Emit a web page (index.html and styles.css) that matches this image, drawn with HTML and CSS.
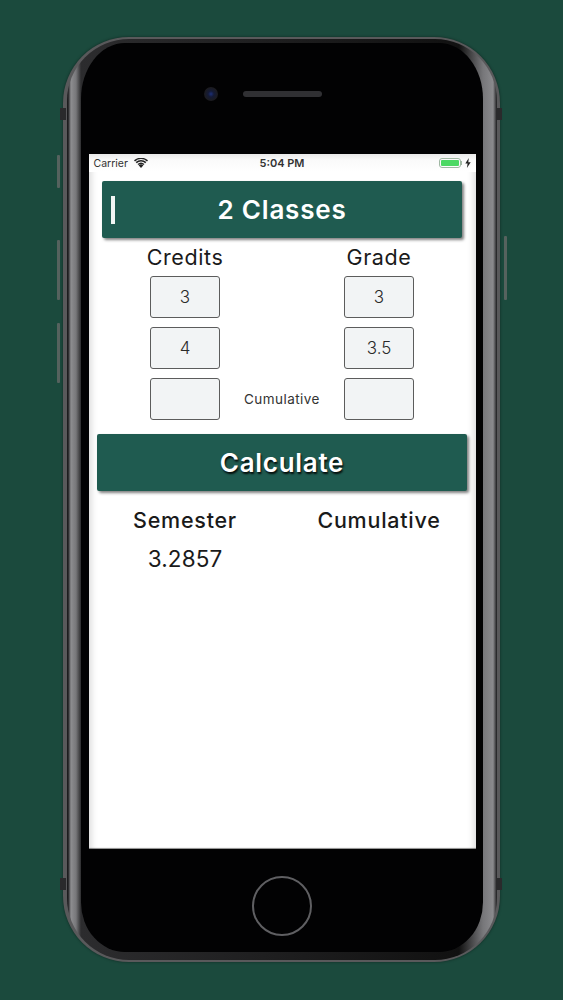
FILE: index.html
```html
<!DOCTYPE html>
<html lang="en">
<head>
<meta charset="utf-8">
<title>GPA Calculator</title>
<link rel="stylesheet" href="styles.css">
</head>
<body>
<div class="phone">
  <span class="side mute"></span>
  <span class="side vol-up"></span>
  <span class="side vol-down"></span>
  <span class="side power"></span>
  <span class="band band-tl"></span>
  <span class="band band-bl"></span>
  <span class="band band-tr"></span>
  <span class="band band-br"></span>
  <div class="rim">
    <div class="bezel">
      <div class="top-bezel">
        <span class="camera"></span>
        <span class="speaker"></span>
      </div>
      <div class="screen">
        <div class="status">
          <div class="status-left">
            <span>Carrier</span>
            <svg class="wifi" viewBox="0 0 14 10" width="14" height="10"><path d="M7 10 4.6 7.2a3.6 3.6 0 0 1 4.8 0Z" fill="#222"/><path d="M3.5 6A5.3 5.3 0 0 1 10.500 6l-1 1.100a3.900 3.900 0 0 0-5 0Z" fill="#222"/><path d="M1.700 4.100A8 8 0 0 1 12.300 4.100l-1 1.100a6.500 6.500 0 0 0-8.600 0Z" fill="#222"/><path d="M0 2.300A10.500 10.500 0 0 1 14 2.300l-1 1.100a9 9 0 0 0-12 0Z" fill="#222"/></svg>
          </div>
          <span class="clock">5:04 PM</span>
          <div class="status-right">
            <span class="battery"><span class="battery-fill"></span></span>
            <span class="battery-nub"></span>
            <svg class="bolt" viewBox="0 0 6 10" width="6" height="10"><path d="M3.800 0 0.300 5.600H2.600L1.900 10 5.700 4.200H3.300Z" fill="#222"/></svg>
          </div>
        </div>
        <div class="title-bar"><span class="cursor"></span><span class="title">2 Classes</span></div>
        <div class="table">
          <div class="heading">Credits</div><div></div><div class="heading">Grade</div>
          <div class="field">3</div><div></div><div class="field">3</div>
          <div class="field">4</div><div></div><div class="field">3.5</div>
          <div class="field"></div><div class="cumulative-label">Cumulative</div><div class="field"></div>
        </div>
        <div class="calculate">Calculate</div>
        <div class="results">
          <div class="result-head">Semester</div><div></div><div class="result-head">Cumulative</div>
          <div class="result-value">3.2857</div><div></div><div></div>
        </div>
      </div>
      <div class="bottom-bezel"><span class="home"></span></div>
    </div>
  </div>
</div>
</body>
</html>
```
FILE: styles.css
```css
* { box-sizing: border-box; }
html, body { margin: 0; height: 1000px; overflow: hidden; }
body {
  background: #1b4a3d;
  padding: 37px 0 0 63px;
  font-family: Inter, "Liberation Sans", sans-serif;
  color: #1a1a1a;
}
.phone {
  position: relative;
  width: 437px;
  height: 925px;
  border-radius: 66px;
  background: #59595b;
  padding: 2px 3px 2px 4px;
  box-shadow: 0 0 3px rgba(0, 0, 0, .45);
}
.rim {
  height: 100%;
  border-radius: 62px;
  background: linear-gradient(90deg, #1c1c1e 0, #1c1c1e 1px, #8d8d90 4px, #77777a 9px, #2c2c2e 14px, #111 392px, #77777a 416px, #8a8a8d 426px, #1c1c1e 430px);
  padding: 4px 14px 8px 14px;
}
.bezel {
  height: 100%;
  background: #020203;
  border-radius: 44px 44px 44px 44px / 56px 56px 50px 50px;
  display: flex;
  flex-direction: column;
  align-items: center;
}
.top-bezel {
  position: relative;
  flex: none;
  width: 100%;
  height: 111px;
}
.camera {
  position: absolute;
  left: 123px;
  top: 44px;
  width: 14px;
  height: 14px;
  border-radius: 50%;
  background: radial-gradient(circle at 50% 50%, #1c2f78 0, #141a35 30%, #1b1b20 65%, #0a0a0c 100%);
}
.speaker {
  position: absolute;
  left: 162px;
  top: 48px;
  width: 79px;
  height: 6px;
  border-radius: 3px;
  background: #303033;
}
.screen {
  flex: none;
  width: 387px;
  height: 695px;
  background: #fff;
  box-shadow: inset 8px 0 7px -6px rgba(0, 0, 0, .16), inset -8px 0 7px -6px rgba(0, 0, 0, .16), inset 0 -2px 1px -1px rgba(0, 0, 0, .45);
  display: flex;
  flex-direction: column;
  align-items: center;
}
.status {
  flex: none;
  width: 100%;
  height: 18px;
  padding: 0 5px;
  font-size: 10.500px;
  display: flex;
  align-items: center;
  justify-content: space-between;
  color: #333;
  background: linear-gradient(#e9e9e9, #fafafa 6px, #fff);
}
.status-left { display: flex; align-items: center; gap: 6px; width: 80px; }
.clock { font-weight: 600; font-size: 11px; }
.status-right { display: flex; align-items: center; justify-content: flex-end; width: 80px; }
.wifi { margin-top: -1px; }
.battery {
  display: block;
  width: 22px;
  height: 10px;
  border: 1px solid #9fb7a3;
  border-radius: 3px;
  padding: 1px;
}
.battery-fill { display: block; height: 100%; background: #4cd964; border-radius: 1px; }
.battery-nub { display: block; width: 1px; height: 4px; background: #9fb7a3; margin-right: 3px; }
.title-bar, .calculate {
  flex: none;
  background: #1f5b50;
  border-radius: 2px;
  color: #fff;
  box-shadow: 2px 2px 3px rgba(0, 0, 0, .5);
  display: flex;
  align-items: center;
  justify-content: center;
}
.title-bar {
  position: relative;
  width: 360px;
  height: 57px;
  margin-top: 9px;
  font-size: 26px;
  font-weight: 600;
}
.cursor {
  position: absolute;
  left: 9px;
  top: 15px;
  width: 4px;
  height: 28px;
  background: #f1f6f4;
}
.title { letter-spacing: .8px; }
.table {
  flex: none;
  width: 264px;
  display: grid;
  grid-template-columns: 70px 124px 70px;
  grid-template-rows: 29px;
  grid-auto-rows: 42px;
  row-gap: 9px;
  justify-items: center;
  align-items: center;
}
.heading {
  align-self: start;
  font-size: 21.500px;
  white-space: nowrap;
  height: 29px;
  line-height: 38px;
  letter-spacing: .6px;
}
.field {
  width: 70px;
  height: 42px;
  background: #f2f4f5;
  border: 1.500px solid #5c5c5c;
  border-radius: 3px;
  font-size: 17px;
  font-weight: 300;
  display: flex;
  align-items: center;
  justify-content: center;
  color: #2a2a2a;
}
.cumulative-label { font-size: 13.500px; color: #333; white-space: nowrap; letter-spacing: .45px; }
.calculate {
  width: 370px;
  height: 57px;
  margin-top: 14px;
  font-size: 26px;
  font-weight: 600;
  letter-spacing: .7px;
  text-shadow: 1px 2px 2px rgba(0, 0, 0, .9);
}
.results {
  flex: none;
  width: 264px;
  display: grid;
  grid-template-columns: 70px 124px 70px;
  justify-items: center;
  margin-top: 14px;
}
.result-head { font-size: 21.500px; font-weight: 500; white-space: nowrap; height: 30px; line-height: 30px; letter-spacing: .75px; }
.result-value { font-size: 22.500px; font-weight: 400; white-space: nowrap; height: 38px; line-height: 48px; letter-spacing: .1px; }
.bottom-bezel {
  flex: 1;
  width: 100%;
  display: flex;
  align-items: flex-start;
  justify-content: center;
  padding-top: 27px;
}
.home {
  width: 60px;
  height: 60px;
  border-radius: 50%;
  border: 2px solid #5f5f62;
}
.side { position: absolute; background: #56625e; border-radius: 1px; }
.mute { left: -6px; top: 118px; width: 3px; height: 33px; }
.vol-up { left: -6px; top: 203px; width: 3px; height: 60px; }
.vol-down { left: -6px; top: 286px; width: 3px; height: 60px; }
.power { right: -7px; top: 199px; width: 3px; height: 64px; }
.band { position: absolute; width: 6px; height: 12px; background: #2a2a2c; }
.band-tl { left: -3px; top: 71px; }
.band-bl { left: -3px; top: 841px; }
.band-tr { right: -2px; top: 71px; }
.band-br { right: -2px; top: 841px; }
```
